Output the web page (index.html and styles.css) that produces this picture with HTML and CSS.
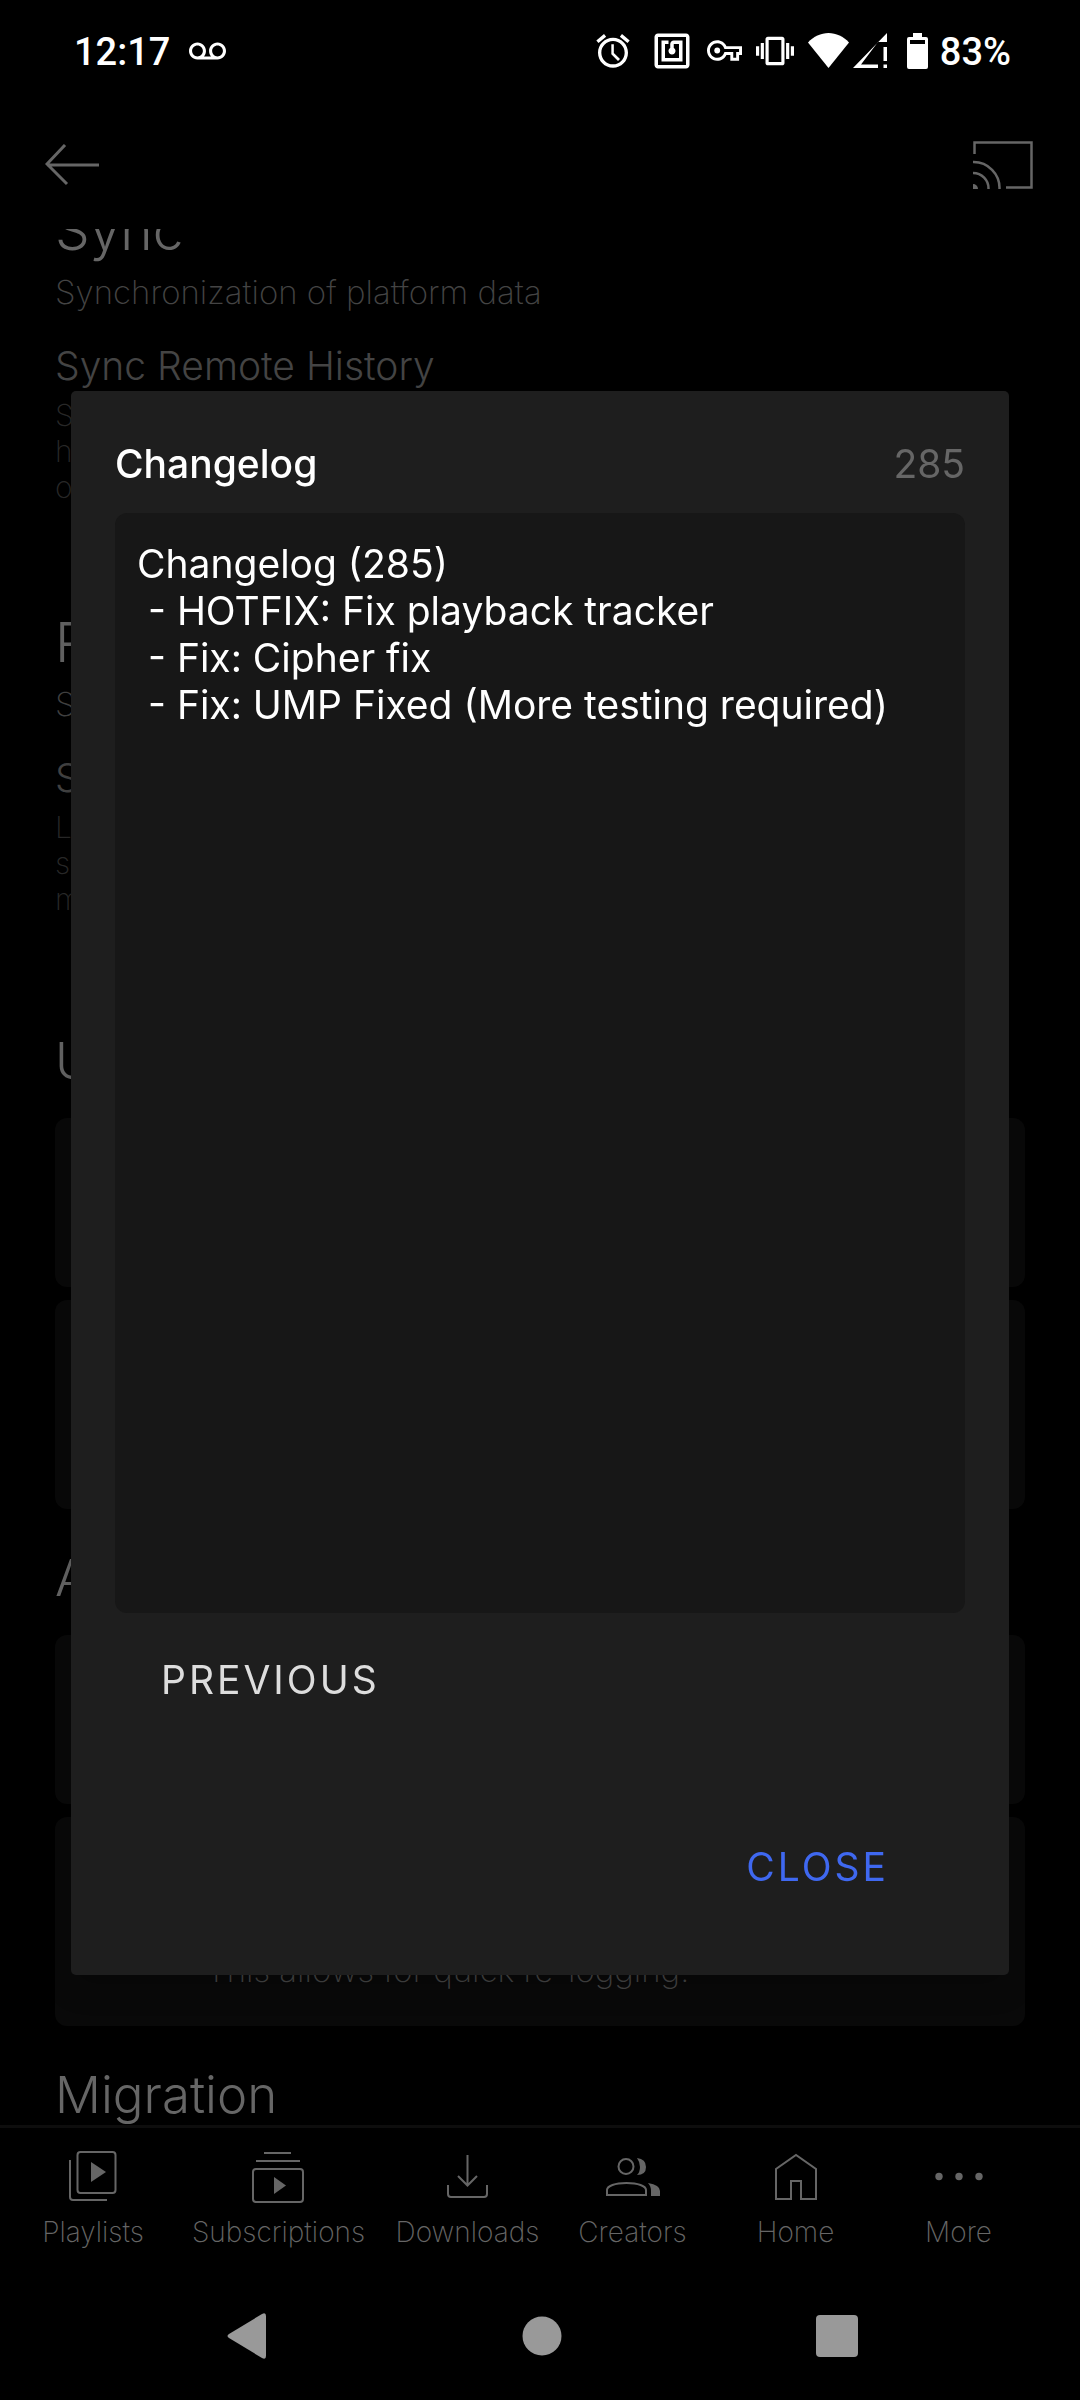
FILE: index.html
```html
<!DOCTYPE html>
<html lang="en">
<head>
    <meta charset="utf-8">
    <meta name="viewport" content="width=device-width, initial-scale=1">
    <title>Changelog</title>
    <link rel="stylesheet" href="styles.css">
</head>
<body>
    <div class="screen">
        <!-- Status bar -->
        <div class="status-bar">
            <div class="status-left">
                <span class="clock">12:17</span>
                <svg width="37" height="18" viewBox="0 6 24 11"><path d="M18.5 6C15.46 6 13 8.46 13 11.5c0 1.33.47 2.55 1.26 3.5H9.74c.79-.95 1.26-2.17 1.26-3.5C11 8.46 8.54 6 5.5 6S0 8.46 0 11.5 2.46 17 5.5 17h13c3.04 0 5.5-2.46 5.5-5.5S21.54 6 18.5 6zm-13 9C3.57 15 2 13.43 2 11.5S3.57 8 5.5 8 9 9.57 9 11.5 7.43 15 5.5 15zm13 0c-1.93 0-3.5-1.57-3.5-3.5S16.57 8 18.5 8 22 9.57 22 11.5 20.43 15 18.5 15z"/></svg>
            </div>
            <div class="status-right">
                <svg class="alarm" width="40" height="40" viewBox="0 0 24 24"><path d="M22 5.72l-4.6-3.86-1.29 1.53 4.6 3.86L22 5.72zM7.88 3.39L6.6 1.86 2 5.71l1.29 1.53 4.59-3.85zM12.5 8H11v6l4 4 1.2-1.2-3.7-3.6V8zM12 4c-4.97 0-9 4.03-9 9s4.02 9 9 9c4.97 0 9-4.03 9-9s-4.03-9-9-9zm0 16c-3.87 0-7-3.13-7-7s3.13-7 7-7 7 3.13 7 7-3.13 7-7 7z"/></svg>
                <svg width="42" height="42" viewBox="0 0 24 24"><path d="M20 2H4c-1.1 0-2 .9-2 2v16c0 1.1.9 2 2 2h16c1.1 0 2-.9 2-2V4c0-1.1-.9-2-2-2zm0 18H4V4h16v16zM18 6h-5c-1.1 0-2 .9-2 2v2.28c-.6.35-1 .98-1 1.72 0 1.1.9 2 2 2s2-.9 2-2c0-.74-.4-1.38-1-1.72V8h3v8H8V8h2V6H6v12h12V6z"/></svg>
                <svg width="35" height="35" viewBox="0 0 24 24"><path d="M22 19h-6v-4h-2.68c-1.14 2.42-3.6 4-6.32 4-3.86 0-7-3.14-7-7s3.14-7 7-7c2.72 0 5.17 1.58 6.32 4H24v6h-2v4zm-4-2h2v-4h2v-2H11.94l-.23-.67C11.01 8.34 9.11 7 7 7c-2.76 0-5 2.24-5 5s2.24 5 5 5c2.11 0 4.01-1.34 4.71-3.33l.23-.67H18v4z"/><circle cx="7" cy="12" r="2"/></svg>
                <svg width="38" height="38" viewBox="0 0 24 24"><path d="M0 15h2V9H0v6zm3 2h2V7H3v10zm19-8v6h2V9h-2zm-3 8h2V7h-2v10zM16.5 3h-9C6.67 3 6 3.67 6 4.5v15c0 .83.67 1.5 1.5 1.5h9c.83 0 1.5-.67 1.5-1.5v-15c0-.83-.67-1.5-1.5-1.5zM16 19H8V5h8v14z"/></svg>
                <div class="network">
                    <svg width="41" height="35" viewBox="0 0 41 35"><path d="M20.500 35L0 9.500C5.500 3.500 13 0 20.500 0S35.500 3.500 41 9.500z"/></svg>
                    <svg width="34" height="35" viewBox="0 0 34 35"><path d="M0 35L34 0v9h-9L8 31.500h17V35zM30.500 14H34v14h-3.500zM30.500 31.500H34V35h-3.500z"/></svg>
                </div>
                <div class="battery">
                    <svg width="21" height="36" viewBox="0 0 21 36"><path fill-rule="evenodd" d="M6 0h9v4h4q2 0 2 2v28q0 2-2 2H2q-2 0-2-2V6q0-2 2-2h4zM3 7v4h15V7z"/></svg>
                    <span>83%</span>
                </div>
            </div>
        </div>

        <!-- Top bar -->
        <header class="top-bar">
            <button type="button" aria-label="Back">
                <svg width="54" height="42" viewBox="0 0 54 42" class="line"><path d="M20 1L2 20l20 20M2 21h52" stroke-width="3"/></svg>
            </button>
            <button type="button" aria-label="Cast">
                <svg width="60" height="48" viewBox="0 0 60 48" class="line"><path d="M1.500 13V1.500h57v45H33M0 21a26 26 0 0 1 26.500 27M0 32a15.500 15.500 0 0 1 15.500 16" stroke-width="2.500"/><path d="M0 43a5 5 0 0 1 5 5H0z" fill="#666" stroke="none"/></svg>
            </button>
        </header>

        <!-- Source settings -->
        <main class="content">
            <div class="settings">
                <section class="group">
                    <h2>Sync</h2>
                    <p class="group-desc">Synchronization of platform data</p>
                    <h3>Sync Remote History</h3>
                    <p class="field-desc">Sync your remote watch<br>history when you open the list<br>of watched videos</p>
                </section>
                <section class="group">
                    <h2>Rate-limit</h2>
                    <p class="group-desc">Settings related to rate-limiting</p>
                    <h3>Subscriptions</h3>
                    <p class="field-desc">Limit the amount of<br>subscription requests<br>made at once</p>
                </section>
                <section class="actions">
                    <h2>Update</h2>
                    <div class="card">
                        <h4>Check for updates</h4>
                        <p>Checks for new versions</p>
                    </div>
                    <div class="card">
                        <h4>Changelog</h4>
                        <p>Shows the changes made<br>in each version.</p>
                    </div>
                </section>
                <section class="actions">
                    <h2>Authentication</h2>
                    <div class="card">
                        <h4>Logout</h4>
                        <p>Sign out of the platform</p>
                    </div>
                    <div class="card">
                        <h4>Logout without Clear</h4>
                        <p>Logout but keep the cookies.<br>This allows for quick re-logging.</p>
                    </div>
                </section>
                <section class="actions">
                    <h2>Migration</h2>
                </section>
            </div>
        </main>

        <!-- Bottom navigation -->
        <nav class="bottom-nav">
            <a href="#playlists">
                <svg width="56" height="56" viewBox="0 0 56 56" class="line"><rect x="12.500" y="4" width="38" height="41" rx="3"/><path d="M5 12v37q0 3 3 3h34"/><path d="M26 14l15 10-15 10z" fill="#666" stroke="none"/></svg>
                Playlists
            </a>
            <a href="#subscriptions">
                <svg width="56" height="56" viewBox="0 0 56 56" class="line"><rect x="2" y="21" width="50" height="33" rx="3"/><path d="M13 5h27M5 13h44"/><path d="M23 29l12 8.500L23 46z" fill="#666" stroke="none"/></svg>
                Subscriptions
            </a>
            <a href="#downloads">
                <svg width="56" height="56" viewBox="0 0 56 56" class="line"><path d="M27.500 7v31M18 28l9.500 9.500L37 28M8 37v9q0 3 3 3h33q3 0 3-3v-9"/></svg>
                Downloads
            </a>
            <a href="#creators">
                <svg width="56" height="56" viewBox="0 0 56 56" class="line"><circle cx="21" cy="18.500" r="7.500"/><path d="M2 47v-5c0-4 8-7 19.500-7S41 38 41 42v5z"/><path d="M32 10q9 1 9 9t-9 8q3-3 3-8t-3-9zM43 35q12 2 12 8v5H46v-5q0-5-3-8z" fill="#666" stroke="none"/></svg>
                Creators
            </a>
            <a href="#home">
                <svg width="56" height="56" viewBox="0 0 56 56" class="line"><path d="M8 51V21L28 7l20 14v30H33V33H23v18z"/></svg>
                Home
            </a>
            <a href="#more">
                <svg width="56" height="56" viewBox="0 0 56 56"><g fill="#666"><circle cx="8" cy="28.500" r="3.700"/><circle cx="28" cy="28.500" r="3.700"/><circle cx="48" cy="28.500" r="3.700"/></g></svg>
                More
            </a>
        </nav>

        <!-- System buttons -->
        <div class="system-nav">
            <button type="button" aria-label="System back"><svg width="40" height="46" viewBox="0 0 40 46"><path d="M2 25q-3-2 0-4L35 1q4-2 4 2v40q0 4-4 2z"/></svg></button>
            <button type="button" aria-label="System home"><svg width="40" height="40" viewBox="0 0 40 40"><circle cx="20" cy="20" r="19.500"/></svg></button>
            <button type="button" aria-label="Recent apps"><svg width="42" height="42" viewBox="0 0 42 42"><rect width="42" height="42" rx="4"/></svg></button>
        </div>
    </div>

    <!-- Changelog dialog -->
    <div class="overlay">
        <div class="dialog" role="dialog" aria-labelledby="dialog-title">
            <div class="dialog-header">
                <h1 id="dialog-title">Changelog</h1>
                <span class="version">285</span>
            </div>
            <div class="changelog">Changelog (285)
 - HOTFIX: Fix playback tracker
 - Fix: Cipher fix
 - Fix: UMP Fixed (More testing required)</div>
            <button type="button" class="btn btn-previous">PREVIOUS</button>
            <button type="button" class="btn btn-close">CLOSE</button>
        </div>
    </div>
</body>
</html>
```

FILE: styles.css
```css
* {
    box-sizing: border-box;
    margin: 0;
    padding: 0;
}

body {
    background: #000;
    color: #666;
    font-family: Inter, "Liberation Sans", sans-serif;
    font-weight: 300;
}

button {
    background: none;
    border: 0;
    font: inherit;
    color: inherit;
    cursor: pointer;
}

svg {
    display: block;
    flex: none;
}

.line {
    fill: none;
    stroke: #666;
    stroke-width: 2;
}

.screen {
    display: flex;
    flex-direction: column;
    height: 100vh;
}

/* Status bar */
.status-bar {
    display: flex;
    justify-content: space-between;
    align-items: center;
    height: 101px;
    padding: 0 69px 0 74px;
    color: #fff;
    fill: #fff;
    font: 500 38px/46px Roboto, sans-serif;
}

.status-bar span {
    padding-top: 2px;
}

.status-left,
.status-right,
.network,
.battery {
    display: flex;
    align-items: center;
}

.status-left {
    gap: 19px;
}

.status-right {
    gap: 14px;
}

.alarm {
    margin-right: 4px;
}

.network {
    gap: 4px;
}

.battery {
    gap: 12px;
    margin-left: 6px;
}

/* Top bar */
.top-bar {
    display: flex;
    justify-content: space-between;
    align-items: center;
    height: 128px;
    padding: 0 47px 1px 45px;
}

/* Settings */
.content {
    flex: 1 1 0;
    min-height: 0;
    overflow: hidden;
}

.settings {
    margin-top: -29px;
    padding: 0 55px;
}

.group {
    margin-bottom: 107px;
}

.actions {
    margin-bottom: 32px;
    padding-top: 7px;
}

h2 {
    font-size: 51px;
    line-height: 60px;
    font-weight: 300;
}

.group h2 {
    margin-bottom: 12px;
    font-size: 55px;
}

.group-desc {
    font-size: 33px;
    line-height: 40px;
    font-weight: 200;
    color: #444;
}

h3 {
    margin-top: 30px;
    font-size: 39px;
    line-height: 47px;
    font-weight: 300;
    color: #444;
}

.field-desc {
    margin-top: 8px;
    font-size: 30px;
    line-height: 36px;
    font-weight: 200;
    color: #2a2a2a;
}

.actions h2 {
    margin-bottom: 27px;
}

.card {
    margin-bottom: 13px;
    padding: 36px 36px 36px 151px;
    border-radius: 12px;
    background: #090909;
}

.card h4 {
    margin-bottom: 10px;
    font-size: 39px;
    line-height: 47px;
    font-weight: 300;
}

.card p {
    font-size: 33px;
    line-height: 40px;
    font-weight: 200;
    color: #444;
}

/* Bottom navigation */
.bottom-nav {
    display: grid;
    grid-template-columns: 160fr 211fr 167fr 163fr 163fr 163fr;
    height: 147px;
    padding: 20px 40px 0 13px;
    border-top: 3px solid #0d0d0d;
}

.bottom-nav a {
    display: flex;
    flex-direction: column;
    align-items: center;
    gap: 11px;
    color: #666;
    font-size: 28px;
    line-height: 34px;
    font-weight: 200;
    text-decoration: none;
}

/* System buttons */
.system-nav {
    display: grid;
    grid-template-columns: repeat(3, 1fr);
    height: 128px;
    padding: 0 95px 0 99px;
    fill: #999;
}

.system-nav button {
    display: flex;
    justify-content: center;
    align-items: center;
}

/* Dialog */
.overlay {
    position: fixed;
    inset: 0;
    display: flex;
    justify-content: center;
    align-items: center;
    padding: 0 71px 34px;
}

.dialog {
    display: flex;
    flex-direction: column;
    width: 100%;
    height: 66vh;
    padding: 49px 44px 42px;
    border-radius: 5px;
    background: #1e1e1e;
    box-shadow: 0 12px 30px rgba(0, 0, 0, .2);
    color: #fff;
    font-size: 39px;
    font-weight: 400;
    line-height: 47px;
}

.dialog-header {
    display: flex;
    justify-content: space-between;
    margin-bottom: 26px;
}

.dialog h1 {
    font-size: 39px;
    font-weight: 500;
}

.version {
    color: #666;
}

.changelog {
    flex: 1;
    padding: 27px 22px;
    border-radius: 12px;
    background: #171717;
    white-space: pre-wrap;
}

.btn {
    padding: 43px 46px;
    letter-spacing: 3px;
}

.btn-previous {
    align-self: flex-start;
    margin-bottom: 54px;
    color: #ddd;
}

.btn-close {
    align-self: flex-end;
    padding: 43px 76px;
    color: #3f68f0;
}
```
